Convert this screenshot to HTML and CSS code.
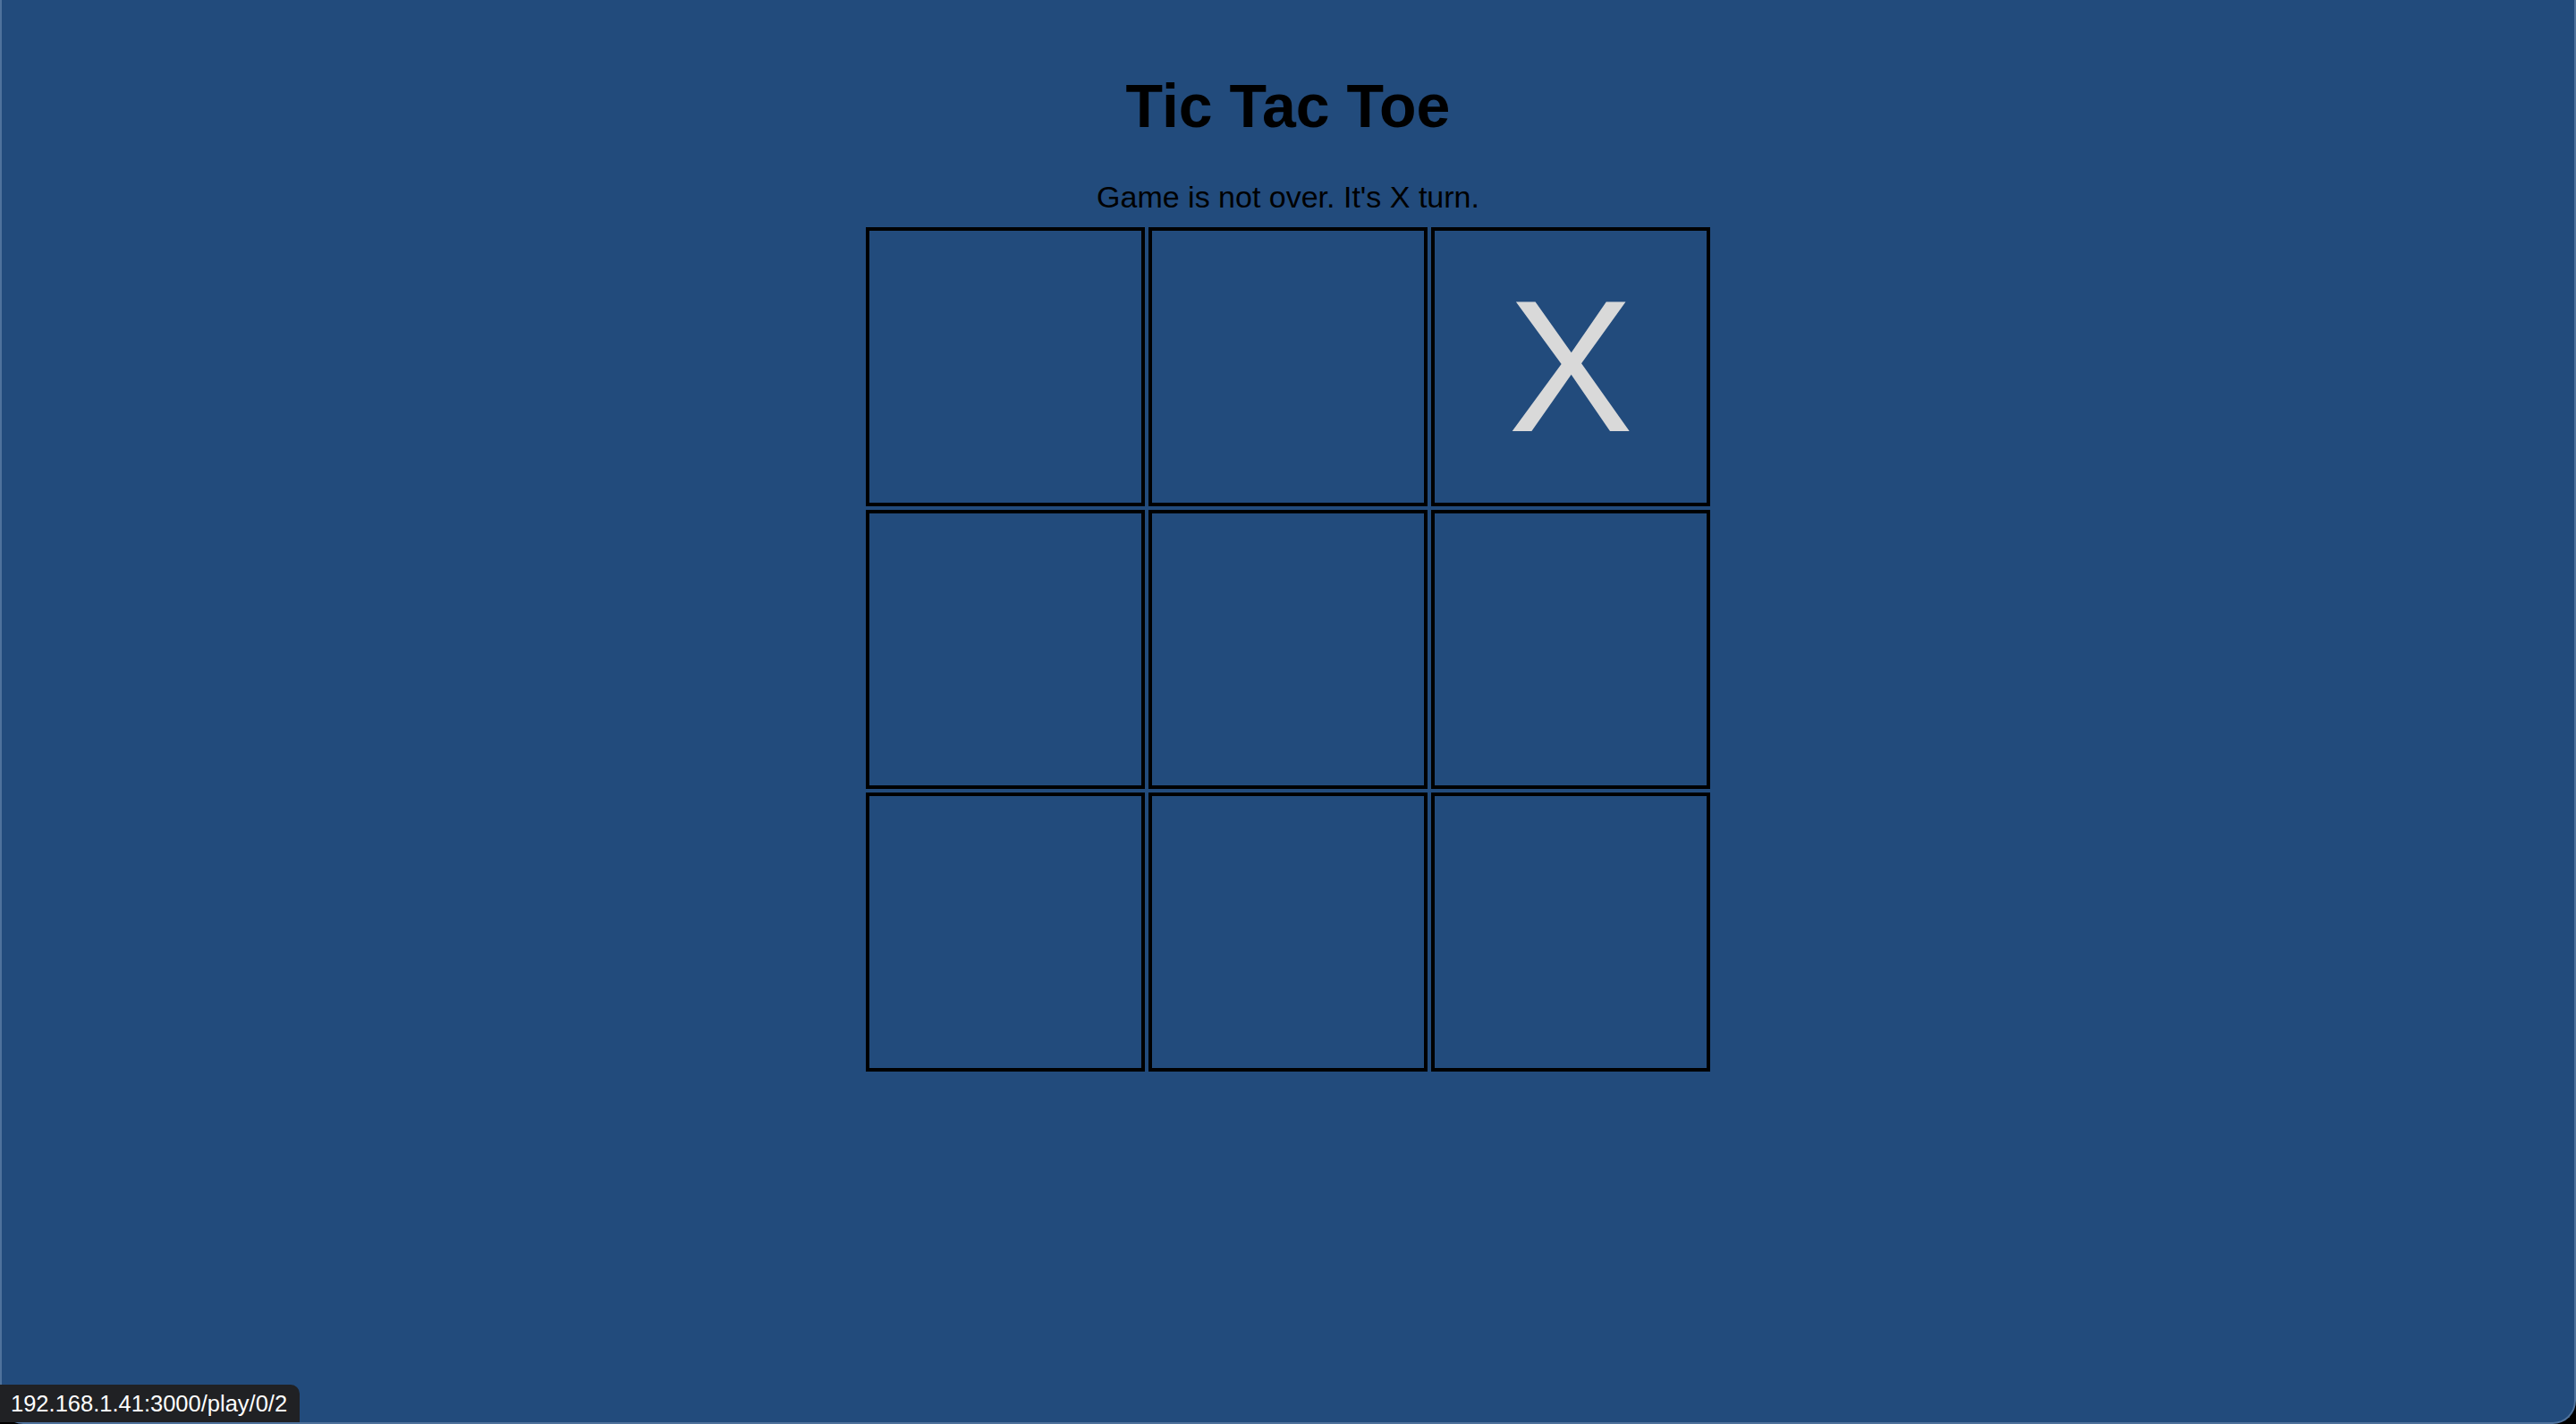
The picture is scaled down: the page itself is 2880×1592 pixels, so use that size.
FILE: index.html
```html
<!DOCTYPE html>
<html lang="en">

<head>
    <meta charset="UTF-8">
    <title>Tic Tac Toe</title>
    <link rel="stylesheet" href="styles.css">
</head>

<body>
    <div class="window">
        <main class="game">
            <h1 class="title">Tic Tac Toe</h1>
            <p class="status">Game is not over. It's X turn.</p>

            <div class="board">
                <a class="cell" href="#"></a>
                <a class="cell" href="#"></a>
                <a class="cell" href="#">X</a>
                <a class="cell" href="#"></a>
                <a class="cell" href="#"></a>
                <a class="cell" href="#"></a>
                <a class="cell" href="#"></a>
                <a class="cell" href="#"></a>
                <a class="cell" href="#"></a>
            </div>
        </main>

        <!-- link preview shown by the browser -->
        <div class="link-status">192.168.1.41:3000/play/0/2</div>
    </div>
</body>

</html>
```
FILE: styles.css
```css
html {
    background: #000;
}

body {
    margin: 0;
    height: 1592px;
    font-family: "Liberation Sans", Arial, Helvetica, sans-serif;
    overflow: hidden;
}

.window {
    position: relative;
    box-sizing: border-box;
    height: 100%;
    background: #224b7c;
    border: 2px solid #4f729c;
    border-top: none;
    border-radius: 0 0 26px 26px;
}

.game {
    display: flex;
    flex-direction: column;
    align-items: center;
    padding-top: 79px;
}

.title {
    margin: 0;
    font-size: 68px;
    font-weight: bold;
    color: #000;
}

.status {
    margin: 44px 0 0;
    font-size: 34px;
    color: #000;
}

.board {
    display: grid;
    grid-template-columns: repeat(3, 312px);
    grid-auto-rows: 312px;
    gap: 4px;
    margin-top: 14px;
}

.cell {
    box-sizing: border-box;
    display: flex;
    justify-content: center;
    align-items: center;
    border: 4px solid #000;
    font-size: 210px;
    line-height: 1;
    color: #d9d9d9;
    text-decoration: none;
}

/* link preview */
.link-status {
    position: absolute;
    left: -2px;
    bottom: 0;
    height: 42px;
    padding: 0 14px 0 12px;
    display: flex;
    align-items: center;
    background: #202124;
    border-radius: 0 10px 0 0;
    color: #fff;
    font-size: 25.5px;
}
```
